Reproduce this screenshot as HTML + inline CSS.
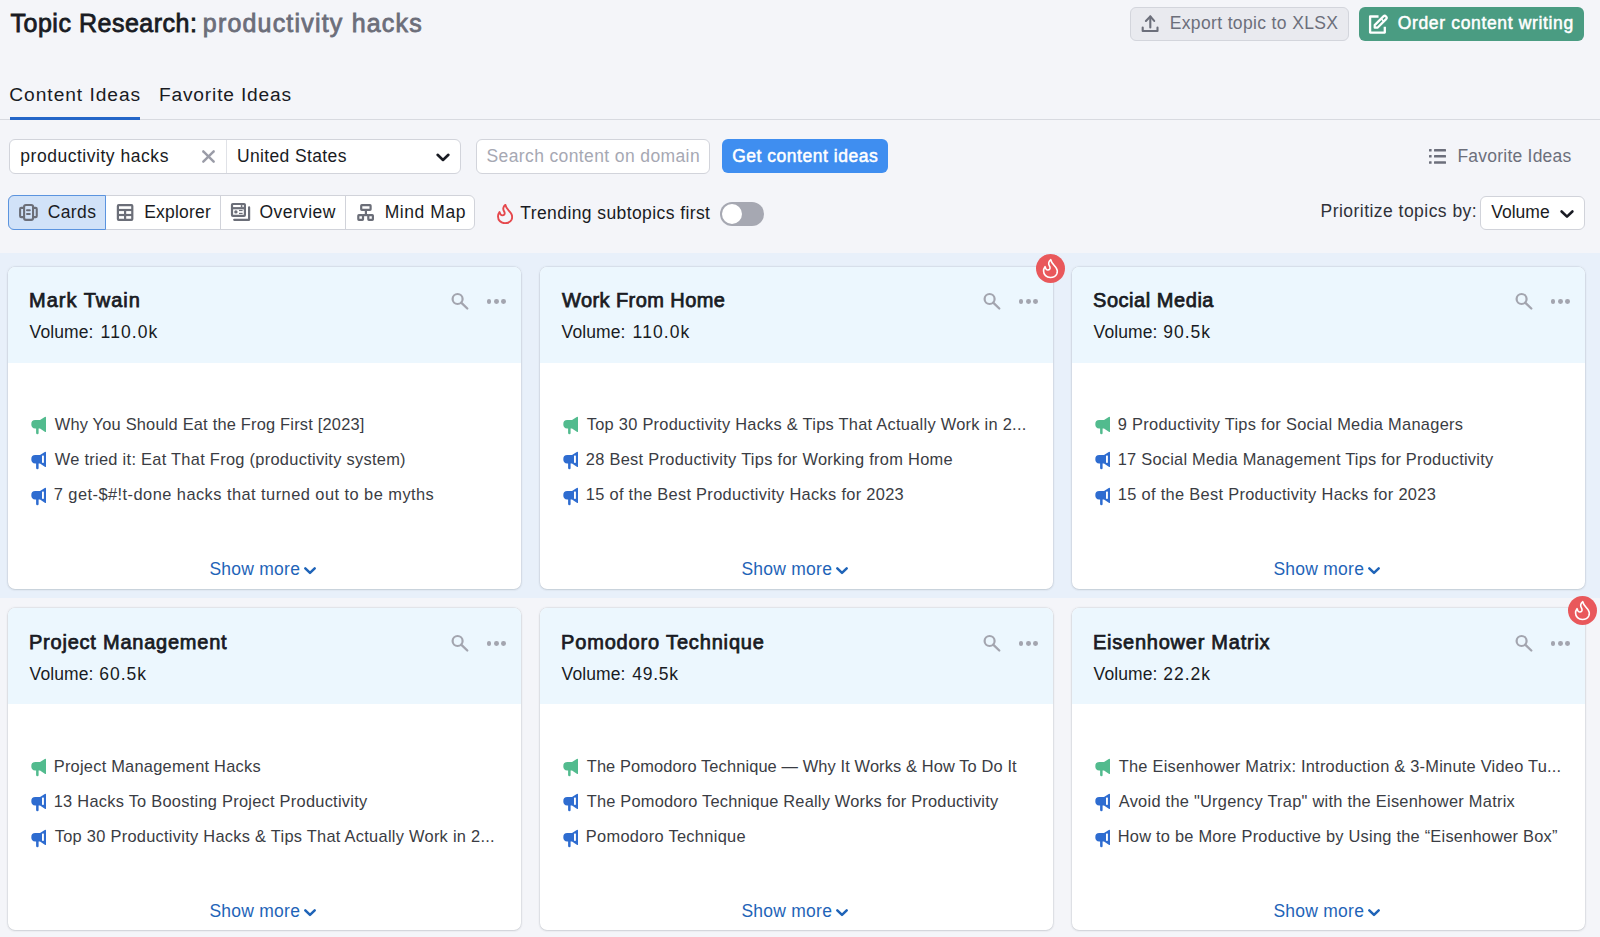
<!DOCTYPE html>
<html><head><meta charset="utf-8"><title>Topic Research</title>
<style>
html,body{margin:0;padding:0;}
body{width:1600px;height:937px;overflow:hidden;position:relative;background:#f4f5f9;font-family:"Liberation Sans", sans-serif;}
.t{position:absolute;white-space:nowrap;}
.abs{position:absolute;}
.band{position:absolute;left:0;top:253px;width:1600px;height:345px;background:#e8f0fa;}
.card{position:absolute;width:513px;height:322px;background:#fff;border-radius:7px;box-shadow:0 0 0 0.5px rgba(40,45,60,0.06),0 0 2.5px rgba(40,45,60,0.15),0 1px 2px rgba(40,45,60,0.10);overflow:hidden;}
.chead{position:absolute;left:0;top:0;width:513px;height:96px;background:#ecf7fe;}
.dot{position:absolute;width:4.8px;height:4.8px;border-radius:50%;background:#a3a5af;}
.badge{position:absolute;width:29px;height:29px;border-radius:50%;background:#e9585b;}
.box{position:absolute;box-sizing:border-box;}
</style></head><body>
<div class="band"></div>
<!-- header buttons -->
<div class="box" style="left:1130px;top:7px;width:219px;height:34px;background:#e9eaef;border:1px solid #d3d5dc;border-radius:6px"></div>
<svg class="abs" style="left:1140px;top:14px" width="20" height="20" viewBox="0 0 20 20"><polyline points="5.9,6.9 10.3,2.4 14.2,6.9" fill="none" stroke="#6c6f7b" stroke-width="2.1" stroke-linecap="round" stroke-linejoin="round"/><line x1="10.3" y1="2.6" x2="10.3" y2="13.4" stroke="#6c6f7b" stroke-width="2.1" stroke-linecap="round"/><polyline points="2.7,13.6 2.7,17 17.5,17 17.5,13.6" fill="none" stroke="#6c6f7b" stroke-width="2.1" stroke-linecap="round" stroke-linejoin="round"/></svg>
<div class="box" style="left:1359px;top:7px;width:225px;height:33.5px;background:#4a9c82;border-radius:6px"></div>
<svg class="abs" style="left:1364px;top:10px" width="26" height="26" viewBox="0 0 26 26"><polyline points="13.4,6.5 6.1,6.5 6.1,22.6 20.8,22.6 20.8,18" fill="none" stroke="#fff" stroke-width="2.3" stroke-linejoin="round" stroke-linecap="square"/><path d="M10.7 17.7 V15.1 L19.4 6.4 A1.91 1.91 0 0 1 22.1 9.1 L13.5 17.7 Z" fill="none" stroke="#fff" stroke-width="2.2" stroke-linejoin="round"/><line x1="17.2" y1="8.7" x2="19.7" y2="11.2" stroke="#fff" stroke-width="1.6"/></svg>
<!-- tabs -->
<div class="abs" style="left:0;top:119px;width:1600px;height:1px;background:#d8dae0"></div>
<div class="abs" style="left:9.6px;top:117px;width:130.6px;height:3px;background:#2466c8"></div>
<!-- search row -->
<div class="box" style="left:9px;top:139px;width:451.5px;height:34.5px;background:#fff;border:1px solid #d2d4db;border-radius:6px"></div>
<div class="abs" style="left:226px;top:140px;width:1.2px;height:32.5px;background:#e0e2e7"></div>
<svg class="abs" style="left:200px;top:148px" width="17" height="17" viewBox="0 0 17 17"><line x1="3.3" y1="3.3" x2="13.7" y2="13.7" stroke="#9a9ca7" stroke-width="2.4" stroke-linecap="round"/><line x1="13.7" y1="3.3" x2="3.3" y2="13.7" stroke="#9a9ca7" stroke-width="2.4" stroke-linecap="round"/></svg>
<svg class="abs" style="left:435px;top:150px" width="16" height="14" viewBox="0 0 16 14"><polyline points="2.6,4.8 8,10 13.4,4.8" fill="none" stroke="#191b23" stroke-width="2.6" stroke-linecap="round" stroke-linejoin="round"/></svg>
<div class="box" style="left:476px;top:139px;width:234px;height:34.5px;background:#fff;border:1px solid #d2d4db;border-radius:6px"></div>
<div class="box" style="left:722px;top:139px;width:166px;height:34.3px;background:#3f8ef0;border-radius:6px"></div>
<svg class="abs" style="left:1426px;top:146px" width="22" height="20" viewBox="0 0 22 20"><g fill="#6c6f7b"><rect x="3" y="2.9" width="2.6" height="2.5" rx="0.5"/><rect x="3" y="9" width="2.6" height="2.5" rx="0.5"/><rect x="3" y="15.3" width="2.6" height="2.5" rx="0.5"/><rect x="8" y="2.9" width="12" height="2.5" rx="0.5"/><rect x="8" y="9" width="12" height="2.5" rx="0.5"/><rect x="8" y="15.3" width="12" height="2.5" rx="0.5"/></g></svg>
<!-- view row -->
<div class="box" style="left:8px;top:195px;width:466.5px;height:34.5px;background:#fff;border:1px solid #d1d3da;border-radius:6px"></div>
<div class="box" style="left:8px;top:195px;width:98px;height:34.5px;background:#d1e2f8;border:1px solid #5b94df;border-radius:6px 0 0 6px"></div>
<div class="abs" style="left:220px;top:196px;width:1px;height:32.5px;background:#d1d3da"></div>
<div class="abs" style="left:345px;top:196px;width:1px;height:32.5px;background:#d1d3da"></div>
<svg class="abs" style="left:17px;top:202px" width="22" height="20" viewBox="0 0 22 20"><g fill="none" stroke="#6b6e78" stroke-width="2.1" stroke-linejoin="round"><rect x="7.1" y="2.95" width="8.95" height="14.9" rx="1.8"/><path d="M7.1 5.85 H4.3 Q3.1 5.85 3.1 7.05 V13.95 Q3.1 15.15 4.3 15.15 H7.1"/><path d="M16.05 5.85 H18.55 Q19.75 5.85 19.75 7.05 V13.95 Q19.75 15.15 18.55 15.15 H16.05"/></g><g stroke="#6b6e78" stroke-width="2" stroke-linecap="round"><line x1="10" y1="8.2" x2="12.8" y2="8.2"/><line x1="10" y1="11.9" x2="12.8" y2="11.9"/></g></svg>
<svg class="abs" style="left:115px;top:202px" width="20" height="20" viewBox="0 0 20 20"><g fill="none" stroke="#6b6e78" stroke-width="2.2"><rect x="2.9" y="3.1" width="14.4" height="14.7" rx="0.8"/><line x1="2.9" y1="8" x2="17.3" y2="8"/><line x1="2.9" y1="13" x2="17.3" y2="13"/><line x1="10.1" y1="8" x2="10.1" y2="17.8"/></g></svg>
<svg class="abs" style="left:229px;top:201px" width="22" height="21" viewBox="0 0 22 21"><g fill="none" stroke="#6b6e78" stroke-width="2.2" stroke-linejoin="round"><rect x="3" y="3" width="12.9" height="11.9" rx="0.8"/><line x1="3" y1="7.2" x2="15.9" y2="7.2"/><polyline points="5.2,18.8 20.1,18.8 20.1,6.4" stroke-linecap="round"/></g><circle cx="6.9" cy="10.9" r="1.7" fill="#6b6e78"/><g stroke="#6b6e78" stroke-width="1.2"><line x1="10" y1="9.5" x2="13.6" y2="9.5"/><line x1="10" y1="12.4" x2="13.6" y2="12.4"/><line x1="12.6" y1="4.1" x2="12.6" y2="6.1" stroke-width="1.6"/></g></svg>
<svg class="abs" style="left:355px;top:202px" width="22" height="20" viewBox="0 0 22 20"><g fill="none" stroke="#6b6e78" stroke-width="2.2" stroke-linejoin="round"><rect x="6.2" y="3.2" width="9.4" height="4.6" rx="0.6"/><line x1="10.9" y1="7.8" x2="10.9" y2="13.1"/><rect x="3.3" y="13.1" width="4.7" height="4.7" rx="0.6"/><rect x="13.3" y="13.1" width="4.6" height="4.7" rx="0.6"/><line x1="8" y1="13.1" x2="13.3" y2="13.1"/></g></svg>
<svg class="abs" style="left:497px;top:204px" width="16" height="20" viewBox="0 0 16 20"><path d="M8.4 0.8 C9 4.5 12 6.5 13.8 9 C15.2 11 15.5 13.5 14.6 15.6 C13.5 18 11 19.2 8 19.2 C4 19.2 1 16.2 1 12.4 C1 10.7 1.6 9.2 2.5 8 C3 10 3.8 11.4 5.4 11.4 C7 11.4 8 10.3 7.6 8.6 C7.2 7.2 6 6.3 6.3 4.2 C6.5 2.8 7.3 1.6 8.4 0.8 Z" fill="none" stroke="#e5484d" stroke-width="1.9" stroke-linejoin="round"/></svg>
<div class="abs" style="left:720px;top:201.5px;width:44px;height:24px;border-radius:12px;background:#a6a8b2"></div>
<div class="abs" style="left:722px;top:203.5px;width:20px;height:20px;border-radius:50%;background:#fff"></div>
<div class="box" style="left:1480px;top:195.5px;width:104.5px;height:34px;background:#fff;border:1px solid #d1d3da;border-radius:6px"></div>
<svg class="abs" style="left:1559px;top:207px" width="16" height="14" viewBox="0 0 16 14"><polyline points="2.6,4.5 8,9.6 13.4,4.5" fill="none" stroke="#191b23" stroke-width="2.6" stroke-linecap="round" stroke-linejoin="round"/></svg>
<!-- cards -->
<div class='card' style='left:8px;top:267px'><div class='chead'></div></div>
<svg class='abs' style='left:449px;top:291px' width='20' height='20' viewBox='0 0 20 20'><circle cx='8.6' cy='8' r='5' fill='none' stroke='#a3a5af' stroke-width='2.2'/><line x1='12.2' y1='11.6' x2='18.3' y2='17.5' stroke='#a3a5af' stroke-width='2.3' stroke-linecap='round'/></svg>
<div class='dot' style='left:486.7px;top:299.0px'></div>
<div class='dot' style='left:494.0px;top:299.0px'></div>
<div class='dot' style='left:501.4px;top:299.0px'></div>
<div class='abs' style='left:31px;top:416.3px;width:16px;height:19px'><svg width='16' height='19' viewBox='0 0 16 19'><path d='M4.2 4.1 H9 L13.8 0.9 Q15 0.2 15 1.6 V15.2 Q15 16.6 13.8 15.8 L9 12.4 H4.2 Q0.3 12.4 0.3 8.25 Q0.3 4.1 4.2 4.1Z' fill='#52bb8e'/><rect x='5.1' y='10.5' width='2.5' height='7.8' rx='1.25' fill='#52bb8e'/></svg></div>
<div class='abs' style='left:31px;top:451.4px;width:16px;height:19px'><svg width='16' height='19' viewBox='0 0 16 19'><path d='M4.2 4.1 H9 L13.8 0.9 Q15 0.2 15 1.6 V15.2 Q15 16.6 13.8 15.8 L9 12.4 H4.2 Q0.3 12.4 0.3 8.25 Q0.3 4.1 4.2 4.1Z' fill='#2e6cd0'/><rect x='5.1' y='10.5' width='2.5' height='7.8' rx='1.25' fill='#2e6cd0'/><rect x='11' y='4.6' width='1.9' height='7.2' fill='#fff'/></svg></div>
<div class='abs' style='left:31px;top:486.5px;width:16px;height:19px'><svg width='16' height='19' viewBox='0 0 16 19'><path d='M4.2 4.1 H9 L13.8 0.9 Q15 0.2 15 1.6 V15.2 Q15 16.6 13.8 15.8 L9 12.4 H4.2 Q0.3 12.4 0.3 8.25 Q0.3 4.1 4.2 4.1Z' fill='#2e6cd0'/><rect x='5.1' y='10.5' width='2.5' height='7.8' rx='1.25' fill='#2e6cd0'/><rect x='11' y='4.6' width='1.9' height='7.2' fill='#fff'/></svg></div>
<svg class='abs' style='left:302px;top:564px' width='16' height='12' viewBox='0 0 16 12'><polyline points='3.3,4.3 8,8.9 12.7,4.3' fill='none' stroke='#1f64b8' stroke-width='2.5' stroke-linecap='round' stroke-linejoin='round'/></svg>
<div class='card' style='left:540px;top:267px'><div class='chead'></div></div>
<svg class='abs' style='left:981px;top:291px' width='20' height='20' viewBox='0 0 20 20'><circle cx='8.6' cy='8' r='5' fill='none' stroke='#a3a5af' stroke-width='2.2'/><line x1='12.2' y1='11.6' x2='18.3' y2='17.5' stroke='#a3a5af' stroke-width='2.3' stroke-linecap='round'/></svg>
<div class='dot' style='left:1018.7px;top:299.0px'></div>
<div class='dot' style='left:1026.0px;top:299.0px'></div>
<div class='dot' style='left:1033.4px;top:299.0px'></div>
<div class='abs' style='left:563px;top:416.3px;width:16px;height:19px'><svg width='16' height='19' viewBox='0 0 16 19'><path d='M4.2 4.1 H9 L13.8 0.9 Q15 0.2 15 1.6 V15.2 Q15 16.6 13.8 15.8 L9 12.4 H4.2 Q0.3 12.4 0.3 8.25 Q0.3 4.1 4.2 4.1Z' fill='#52bb8e'/><rect x='5.1' y='10.5' width='2.5' height='7.8' rx='1.25' fill='#52bb8e'/></svg></div>
<div class='abs' style='left:563px;top:451.4px;width:16px;height:19px'><svg width='16' height='19' viewBox='0 0 16 19'><path d='M4.2 4.1 H9 L13.8 0.9 Q15 0.2 15 1.6 V15.2 Q15 16.6 13.8 15.8 L9 12.4 H4.2 Q0.3 12.4 0.3 8.25 Q0.3 4.1 4.2 4.1Z' fill='#2e6cd0'/><rect x='5.1' y='10.5' width='2.5' height='7.8' rx='1.25' fill='#2e6cd0'/><rect x='11' y='4.6' width='1.9' height='7.2' fill='#fff'/></svg></div>
<div class='abs' style='left:563px;top:486.5px;width:16px;height:19px'><svg width='16' height='19' viewBox='0 0 16 19'><path d='M4.2 4.1 H9 L13.8 0.9 Q15 0.2 15 1.6 V15.2 Q15 16.6 13.8 15.8 L9 12.4 H4.2 Q0.3 12.4 0.3 8.25 Q0.3 4.1 4.2 4.1Z' fill='#2e6cd0'/><rect x='5.1' y='10.5' width='2.5' height='7.8' rx='1.25' fill='#2e6cd0'/><rect x='11' y='4.6' width='1.9' height='7.2' fill='#fff'/></svg></div>
<svg class='abs' style='left:834px;top:564px' width='16' height='12' viewBox='0 0 16 12'><polyline points='3.3,4.3 8,8.9 12.7,4.3' fill='none' stroke='#1f64b8' stroke-width='2.5' stroke-linecap='round' stroke-linejoin='round'/></svg>
<div class='badge' style='left:1035.5px;top:254.10000000000002px'><svg width='29' height='29' viewBox='0 0 29 29'><g transform='translate(6.6 4.9) scale(0.97)'><path d='M8.4 0.8 C9 4.5 12 6.5 13.8 9 C15.2 11 15.5 13.5 14.6 15.6 C13.5 18 11 19.2 8 19.2 C4 19.2 1 16.2 1 12.4 C1 10.7 1.6 9.2 2.5 8 C3 10 3.8 11.4 5.4 11.4 C7 11.4 8 10.3 7.6 8.6 C7.2 7.2 6 6.3 6.3 4.2 C6.5 2.8 7.3 1.6 8.4 0.8 Z' fill='none' stroke='#fff' stroke-width='1.65' stroke-linejoin='round'/></g></svg></div>
<div class='card' style='left:1072px;top:267px'><div class='chead'></div></div>
<svg class='abs' style='left:1513px;top:291px' width='20' height='20' viewBox='0 0 20 20'><circle cx='8.6' cy='8' r='5' fill='none' stroke='#a3a5af' stroke-width='2.2'/><line x1='12.2' y1='11.6' x2='18.3' y2='17.5' stroke='#a3a5af' stroke-width='2.3' stroke-linecap='round'/></svg>
<div class='dot' style='left:1550.7px;top:299.0px'></div>
<div class='dot' style='left:1558.0px;top:299.0px'></div>
<div class='dot' style='left:1565.4px;top:299.0px'></div>
<div class='abs' style='left:1095px;top:416.3px;width:16px;height:19px'><svg width='16' height='19' viewBox='0 0 16 19'><path d='M4.2 4.1 H9 L13.8 0.9 Q15 0.2 15 1.6 V15.2 Q15 16.6 13.8 15.8 L9 12.4 H4.2 Q0.3 12.4 0.3 8.25 Q0.3 4.1 4.2 4.1Z' fill='#52bb8e'/><rect x='5.1' y='10.5' width='2.5' height='7.8' rx='1.25' fill='#52bb8e'/></svg></div>
<div class='abs' style='left:1095px;top:451.4px;width:16px;height:19px'><svg width='16' height='19' viewBox='0 0 16 19'><path d='M4.2 4.1 H9 L13.8 0.9 Q15 0.2 15 1.6 V15.2 Q15 16.6 13.8 15.8 L9 12.4 H4.2 Q0.3 12.4 0.3 8.25 Q0.3 4.1 4.2 4.1Z' fill='#2e6cd0'/><rect x='5.1' y='10.5' width='2.5' height='7.8' rx='1.25' fill='#2e6cd0'/><rect x='11' y='4.6' width='1.9' height='7.2' fill='#fff'/></svg></div>
<div class='abs' style='left:1095px;top:486.5px;width:16px;height:19px'><svg width='16' height='19' viewBox='0 0 16 19'><path d='M4.2 4.1 H9 L13.8 0.9 Q15 0.2 15 1.6 V15.2 Q15 16.6 13.8 15.8 L9 12.4 H4.2 Q0.3 12.4 0.3 8.25 Q0.3 4.1 4.2 4.1Z' fill='#2e6cd0'/><rect x='5.1' y='10.5' width='2.5' height='7.8' rx='1.25' fill='#2e6cd0'/><rect x='11' y='4.6' width='1.9' height='7.2' fill='#fff'/></svg></div>
<svg class='abs' style='left:1366px;top:564px' width='16' height='12' viewBox='0 0 16 12'><polyline points='3.3,4.3 8,8.9 12.7,4.3' fill='none' stroke='#1f64b8' stroke-width='2.5' stroke-linecap='round' stroke-linejoin='round'/></svg>
<div class='card' style='left:8px;top:608px'><div class='chead'></div></div>
<svg class='abs' style='left:449px;top:633px' width='20' height='20' viewBox='0 0 20 20'><circle cx='8.6' cy='8' r='5' fill='none' stroke='#a3a5af' stroke-width='2.2'/><line x1='12.2' y1='11.6' x2='18.3' y2='17.5' stroke='#a3a5af' stroke-width='2.3' stroke-linecap='round'/></svg>
<div class='dot' style='left:486.7px;top:641.0px'></div>
<div class='dot' style='left:494.0px;top:641.0px'></div>
<div class='dot' style='left:501.4px;top:641.0px'></div>
<div class='abs' style='left:31px;top:758.3px;width:16px;height:19px'><svg width='16' height='19' viewBox='0 0 16 19'><path d='M4.2 4.1 H9 L13.8 0.9 Q15 0.2 15 1.6 V15.2 Q15 16.6 13.8 15.8 L9 12.4 H4.2 Q0.3 12.4 0.3 8.25 Q0.3 4.1 4.2 4.1Z' fill='#52bb8e'/><rect x='5.1' y='10.5' width='2.5' height='7.8' rx='1.25' fill='#52bb8e'/></svg></div>
<div class='abs' style='left:31px;top:793.4px;width:16px;height:19px'><svg width='16' height='19' viewBox='0 0 16 19'><path d='M4.2 4.1 H9 L13.8 0.9 Q15 0.2 15 1.6 V15.2 Q15 16.6 13.8 15.8 L9 12.4 H4.2 Q0.3 12.4 0.3 8.25 Q0.3 4.1 4.2 4.1Z' fill='#2e6cd0'/><rect x='5.1' y='10.5' width='2.5' height='7.8' rx='1.25' fill='#2e6cd0'/><rect x='11' y='4.6' width='1.9' height='7.2' fill='#fff'/></svg></div>
<div class='abs' style='left:31px;top:828.5px;width:16px;height:19px'><svg width='16' height='19' viewBox='0 0 16 19'><path d='M4.2 4.1 H9 L13.8 0.9 Q15 0.2 15 1.6 V15.2 Q15 16.6 13.8 15.8 L9 12.4 H4.2 Q0.3 12.4 0.3 8.25 Q0.3 4.1 4.2 4.1Z' fill='#2e6cd0'/><rect x='5.1' y='10.5' width='2.5' height='7.8' rx='1.25' fill='#2e6cd0'/><rect x='11' y='4.6' width='1.9' height='7.2' fill='#fff'/></svg></div>
<svg class='abs' style='left:302px;top:906px' width='16' height='12' viewBox='0 0 16 12'><polyline points='3.3,4.3 8,8.9 12.7,4.3' fill='none' stroke='#1f64b8' stroke-width='2.5' stroke-linecap='round' stroke-linejoin='round'/></svg>
<div class='card' style='left:540px;top:608px'><div class='chead'></div></div>
<svg class='abs' style='left:981px;top:633px' width='20' height='20' viewBox='0 0 20 20'><circle cx='8.6' cy='8' r='5' fill='none' stroke='#a3a5af' stroke-width='2.2'/><line x1='12.2' y1='11.6' x2='18.3' y2='17.5' stroke='#a3a5af' stroke-width='2.3' stroke-linecap='round'/></svg>
<div class='dot' style='left:1018.7px;top:641.0px'></div>
<div class='dot' style='left:1026.0px;top:641.0px'></div>
<div class='dot' style='left:1033.4px;top:641.0px'></div>
<div class='abs' style='left:563px;top:758.3px;width:16px;height:19px'><svg width='16' height='19' viewBox='0 0 16 19'><path d='M4.2 4.1 H9 L13.8 0.9 Q15 0.2 15 1.6 V15.2 Q15 16.6 13.8 15.8 L9 12.4 H4.2 Q0.3 12.4 0.3 8.25 Q0.3 4.1 4.2 4.1Z' fill='#52bb8e'/><rect x='5.1' y='10.5' width='2.5' height='7.8' rx='1.25' fill='#52bb8e'/></svg></div>
<div class='abs' style='left:563px;top:793.4px;width:16px;height:19px'><svg width='16' height='19' viewBox='0 0 16 19'><path d='M4.2 4.1 H9 L13.8 0.9 Q15 0.2 15 1.6 V15.2 Q15 16.6 13.8 15.8 L9 12.4 H4.2 Q0.3 12.4 0.3 8.25 Q0.3 4.1 4.2 4.1Z' fill='#2e6cd0'/><rect x='5.1' y='10.5' width='2.5' height='7.8' rx='1.25' fill='#2e6cd0'/><rect x='11' y='4.6' width='1.9' height='7.2' fill='#fff'/></svg></div>
<div class='abs' style='left:563px;top:828.5px;width:16px;height:19px'><svg width='16' height='19' viewBox='0 0 16 19'><path d='M4.2 4.1 H9 L13.8 0.9 Q15 0.2 15 1.6 V15.2 Q15 16.6 13.8 15.8 L9 12.4 H4.2 Q0.3 12.4 0.3 8.25 Q0.3 4.1 4.2 4.1Z' fill='#2e6cd0'/><rect x='5.1' y='10.5' width='2.5' height='7.8' rx='1.25' fill='#2e6cd0'/><rect x='11' y='4.6' width='1.9' height='7.2' fill='#fff'/></svg></div>
<svg class='abs' style='left:834px;top:906px' width='16' height='12' viewBox='0 0 16 12'><polyline points='3.3,4.3 8,8.9 12.7,4.3' fill='none' stroke='#1f64b8' stroke-width='2.5' stroke-linecap='round' stroke-linejoin='round'/></svg>
<div class='card' style='left:1072px;top:608px'><div class='chead'></div></div>
<svg class='abs' style='left:1513px;top:633px' width='20' height='20' viewBox='0 0 20 20'><circle cx='8.6' cy='8' r='5' fill='none' stroke='#a3a5af' stroke-width='2.2'/><line x1='12.2' y1='11.6' x2='18.3' y2='17.5' stroke='#a3a5af' stroke-width='2.3' stroke-linecap='round'/></svg>
<div class='dot' style='left:1550.7px;top:641.0px'></div>
<div class='dot' style='left:1558.0px;top:641.0px'></div>
<div class='dot' style='left:1565.4px;top:641.0px'></div>
<div class='abs' style='left:1095px;top:758.3px;width:16px;height:19px'><svg width='16' height='19' viewBox='0 0 16 19'><path d='M4.2 4.1 H9 L13.8 0.9 Q15 0.2 15 1.6 V15.2 Q15 16.6 13.8 15.8 L9 12.4 H4.2 Q0.3 12.4 0.3 8.25 Q0.3 4.1 4.2 4.1Z' fill='#52bb8e'/><rect x='5.1' y='10.5' width='2.5' height='7.8' rx='1.25' fill='#52bb8e'/></svg></div>
<div class='abs' style='left:1095px;top:793.4px;width:16px;height:19px'><svg width='16' height='19' viewBox='0 0 16 19'><path d='M4.2 4.1 H9 L13.8 0.9 Q15 0.2 15 1.6 V15.2 Q15 16.6 13.8 15.8 L9 12.4 H4.2 Q0.3 12.4 0.3 8.25 Q0.3 4.1 4.2 4.1Z' fill='#2e6cd0'/><rect x='5.1' y='10.5' width='2.5' height='7.8' rx='1.25' fill='#2e6cd0'/><rect x='11' y='4.6' width='1.9' height='7.2' fill='#fff'/></svg></div>
<div class='abs' style='left:1095px;top:828.5px;width:16px;height:19px'><svg width='16' height='19' viewBox='0 0 16 19'><path d='M4.2 4.1 H9 L13.8 0.9 Q15 0.2 15 1.6 V15.2 Q15 16.6 13.8 15.8 L9 12.4 H4.2 Q0.3 12.4 0.3 8.25 Q0.3 4.1 4.2 4.1Z' fill='#2e6cd0'/><rect x='5.1' y='10.5' width='2.5' height='7.8' rx='1.25' fill='#2e6cd0'/><rect x='11' y='4.6' width='1.9' height='7.2' fill='#fff'/></svg></div>
<svg class='abs' style='left:1366px;top:906px' width='16' height='12' viewBox='0 0 16 12'><polyline points='3.3,4.3 8,8.9 12.7,4.3' fill='none' stroke='#1f64b8' stroke-width='2.5' stroke-linecap='round' stroke-linejoin='round'/></svg>
<div class='badge' style='left:1567.5px;top:596.1px'><svg width='29' height='29' viewBox='0 0 29 29'><g transform='translate(6.6 4.9) scale(0.97)'><path d='M8.4 0.8 C9 4.5 12 6.5 13.8 9 C15.2 11 15.5 13.5 14.6 15.6 C13.5 18 11 19.2 8 19.2 C4 19.2 1 16.2 1 12.4 C1 10.7 1.6 9.2 2.5 8 C3 10 3.8 11.4 5.4 11.4 C7 11.4 8 10.3 7.6 8.6 C7.2 7.2 6 6.3 6.3 4.2 C6.5 2.8 7.3 1.6 8.4 0.8 Z' fill='none' stroke='#fff' stroke-width='1.65' stroke-linejoin='round'/></g></svg></div>
<!-- texts -->
<div class='t' style='left:10.50px;top:11.20px;font-size:25px;line-height:25px;font-weight:400;color:#191b23;letter-spacing:0.514px;-webkit-text-stroke:0.8px #191b23'>Topic Research:</div>
<div class='t' style='left:202.80px;top:10.80px;font-size:25px;line-height:25px;font-weight:400;color:#6c6e7a;letter-spacing:1.188px;-webkit-text-stroke:0.8px #6c6e7a'>productivity hacks</div>
<div class='t' style='left:1169.70px;top:14.80px;font-size:17.5px;line-height:17.5px;font-weight:400;color:#6c6f7b;letter-spacing:0.358px'>Export topic to XLSX</div>
<div class='t' style='left:1397.75px;top:14.90px;font-size:17.5px;line-height:17.5px;font-weight:400;color:#ffffff;letter-spacing:0.650px;-webkit-text-stroke:0.5px #ffffff'>Order content writing</div>
<div class='t' style='left:9.30px;top:84.90px;font-size:19.2px;line-height:19.2px;font-weight:400;color:#191b23;letter-spacing:0.950px'>Content Ideas</div>
<div class='t' style='left:158.90px;top:84.90px;font-size:19.2px;line-height:19.2px;font-weight:400;color:#191b23;letter-spacing:0.823px'>Favorite Ideas</div>
<div class='t' style='left:20.30px;top:148.20px;font-size:17.5px;line-height:17.5px;font-weight:400;color:#191b23;letter-spacing:0.529px'>productivity hacks</div>
<div class='t' style='left:236.90px;top:147.80px;font-size:17.5px;line-height:17.5px;font-weight:400;color:#191b23;letter-spacing:0.375px'>United States</div>
<div class='t' style='left:486.50px;top:148.00px;font-size:17.5px;line-height:17.5px;font-weight:400;color:#a6a8b3;letter-spacing:0.383px'>Search content on domain</div>
<div class='t' style='left:732.20px;top:147.80px;font-size:17.5px;line-height:17.5px;font-weight:400;color:#ffffff;letter-spacing:0.519px;-webkit-text-stroke:0.5px #ffffff'>Get content ideas</div>
<div class='t' style='left:1457.40px;top:148.25px;font-size:17.5px;line-height:17.5px;font-weight:400;color:#6c6f7b;letter-spacing:0.231px'>Favorite Ideas</div>
<div class='t' style='left:47.75px;top:203.70px;font-size:17.5px;line-height:17.5px;font-weight:400;color:#191b23;letter-spacing:0.375px'>Cards</div>
<div class='t' style='left:144.20px;top:203.70px;font-size:17.5px;line-height:17.5px;font-weight:400;color:#191b23;letter-spacing:0.214px'>Explorer</div>
<div class='t' style='left:259.60px;top:203.50px;font-size:17.5px;line-height:17.5px;font-weight:400;color:#191b23;letter-spacing:0.400px'>Overview</div>
<div class='t' style='left:384.70px;top:203.50px;font-size:17.5px;line-height:17.5px;font-weight:400;color:#191b23;letter-spacing:0.557px'>Mind Map</div>
<div class='t' style='left:520.30px;top:204.50px;font-size:17.5px;line-height:17.5px;font-weight:400;color:#191b23;letter-spacing:0.409px'>Trending subtopics first</div>
<div class='t' style='left:1320.60px;top:203.20px;font-size:17.5px;line-height:17.5px;font-weight:400;color:#2f3138;letter-spacing:0.460px'>Prioritize topics by:</div>
<div class='t' style='left:1491.25px;top:204.10px;font-size:17.5px;line-height:17.5px;font-weight:400;color:#191b23;letter-spacing:0.000px'>Volume</div>
<div class='t' style='left:29.00px;top:290.20px;font-size:20px;line-height:20px;font-weight:400;color:#191b23;letter-spacing:1.000px;-webkit-text-stroke:0.75px #191b23'>Mark Twain</div>
<div class='t' style='left:29.60px;top:324.30px;font-size:17.5px;line-height:17.5px;font-weight:400;color:#191b23;letter-spacing:0.108px'>Volume:</div>
<div class='t' style='left:100.60px;top:324.30px;font-size:17.5px;line-height:17.5px;font-weight:400;color:#191b23;letter-spacing:1.100px'>110.0k</div>
<div class='t' style='left:54.75px;top:415.75px;font-size:16.4px;line-height:16.4px;font-weight:400;color:#3a3c43;letter-spacing:0.205px'>Why You Should Eat the Frog First [2023]</div>
<div class='t' style='left:54.75px;top:450.85px;font-size:16.4px;line-height:16.4px;font-weight:400;color:#3a3c43;letter-spacing:0.287px'>We tried it: Eat That Frog (productivity system)</div>
<div class='t' style='left:53.75px;top:485.95px;font-size:16.4px;line-height:16.4px;font-weight:400;color:#3a3c43;letter-spacing:0.458px'>7 get-$#!t-done hacks that turned out to be myths</div>
<div class='t' style='left:209.40px;top:560.80px;font-size:17.5px;line-height:17.5px;font-weight:400;color:#1f64b8;letter-spacing:0.250px'>Show more</div>
<div class='t' style='left:562.00px;top:290.20px;font-size:20px;line-height:20px;font-weight:400;color:#191b23;letter-spacing:0.423px;-webkit-text-stroke:0.75px #191b23'>Work From Home</div>
<div class='t' style='left:561.60px;top:324.30px;font-size:17.5px;line-height:17.5px;font-weight:400;color:#191b23;letter-spacing:0.108px'>Volume:</div>
<div class='t' style='left:632.60px;top:324.30px;font-size:17.5px;line-height:17.5px;font-weight:400;color:#191b23;letter-spacing:1.100px'>110.0k</div>
<div class='t' style='left:586.75px;top:415.75px;font-size:16.4px;line-height:16.4px;font-weight:400;color:#3a3c43;letter-spacing:0.269px'>Top 30 Productivity Hacks &amp; Tips That Actually Work in 2...</div>
<div class='t' style='left:585.75px;top:450.85px;font-size:16.4px;line-height:16.4px;font-weight:400;color:#3a3c43;letter-spacing:0.299px'>28 Best Productivity Tips for Working from Home</div>
<div class='t' style='left:585.75px;top:485.95px;font-size:16.4px;line-height:16.4px;font-weight:400;color:#3a3c43;letter-spacing:0.311px'>15 of the Best Productivity Hacks for 2023</div>
<div class='t' style='left:741.40px;top:560.80px;font-size:17.5px;line-height:17.5px;font-weight:400;color:#1f64b8;letter-spacing:0.250px'>Show more</div>
<div class='t' style='left:1093.00px;top:290.20px;font-size:20px;line-height:20px;font-weight:400;color:#191b23;letter-spacing:0.545px;-webkit-text-stroke:0.75px #191b23'>Social Media</div>
<div class='t' style='left:1093.60px;top:324.30px;font-size:17.5px;line-height:17.5px;font-weight:400;color:#191b23;letter-spacing:0.108px'>Volume:</div>
<div class='t' style='left:1163.30px;top:324.30px;font-size:17.5px;line-height:17.5px;font-weight:400;color:#191b23;letter-spacing:0.975px'>90.5k</div>
<div class='t' style='left:1117.75px;top:415.75px;font-size:16.4px;line-height:16.4px;font-weight:400;color:#3a3c43;letter-spacing:0.290px'>9 Productivity Tips for Social Media Managers</div>
<div class='t' style='left:1117.75px;top:450.85px;font-size:16.4px;line-height:16.4px;font-weight:400;color:#3a3c43;letter-spacing:0.234px'>17 Social Media Management Tips for Productivity</div>
<div class='t' style='left:1117.75px;top:485.95px;font-size:16.4px;line-height:16.4px;font-weight:400;color:#3a3c43;letter-spacing:0.313px'>15 of the Best Productivity Hacks for 2023</div>
<div class='t' style='left:1273.40px;top:560.80px;font-size:17.5px;line-height:17.5px;font-weight:400;color:#1f64b8;letter-spacing:0.250px'>Show more</div>
<div class='t' style='left:29.00px;top:632.20px;font-size:20px;line-height:20px;font-weight:400;color:#191b23;letter-spacing:0.771px;-webkit-text-stroke:0.75px #191b23'>Project Management</div>
<div class='t' style='left:29.60px;top:666.30px;font-size:17.5px;line-height:17.5px;font-weight:400;color:#191b23;letter-spacing:0.108px'>Volume:</div>
<div class='t' style='left:99.30px;top:666.30px;font-size:17.5px;line-height:17.5px;font-weight:400;color:#191b23;letter-spacing:0.975px'>60.5k</div>
<div class='t' style='left:53.75px;top:757.75px;font-size:16.4px;line-height:16.4px;font-weight:400;color:#3a3c43;letter-spacing:0.239px'>Project Management Hacks</div>
<div class='t' style='left:53.75px;top:792.85px;font-size:16.4px;line-height:16.4px;font-weight:400;color:#3a3c43;letter-spacing:0.259px'>13 Hacks To Boosting Project Productivity</div>
<div class='t' style='left:54.75px;top:827.95px;font-size:16.4px;line-height:16.4px;font-weight:400;color:#3a3c43;letter-spacing:0.276px'>Top 30 Productivity Hacks &amp; Tips That Actually Work in 2...</div>
<div class='t' style='left:209.40px;top:902.80px;font-size:17.5px;line-height:17.5px;font-weight:400;color:#1f64b8;letter-spacing:0.250px'>Show more</div>
<div class='t' style='left:561.00px;top:632.20px;font-size:20px;line-height:20px;font-weight:400;color:#191b23;letter-spacing:0.841px;-webkit-text-stroke:0.75px #191b23'>Pomodoro Technique</div>
<div class='t' style='left:561.60px;top:666.30px;font-size:17.5px;line-height:17.5px;font-weight:400;color:#191b23;letter-spacing:0.108px'>Volume:</div>
<div class='t' style='left:632.30px;top:666.30px;font-size:17.5px;line-height:17.5px;font-weight:400;color:#191b23;letter-spacing:0.725px'>49.5k</div>
<div class='t' style='left:586.75px;top:757.75px;font-size:16.4px;line-height:16.4px;font-weight:400;color:#3a3c43;letter-spacing:0.123px'>The Pomodoro Technique — Why It Works &amp; How To Do It</div>
<div class='t' style='left:586.75px;top:792.85px;font-size:16.4px;line-height:16.4px;font-weight:400;color:#3a3c43;letter-spacing:0.201px'>The Pomodoro Technique Really Works for Productivity</div>
<div class='t' style='left:585.75px;top:827.95px;font-size:16.4px;line-height:16.4px;font-weight:400;color:#3a3c43;letter-spacing:0.309px'>Pomodoro Technique</div>
<div class='t' style='left:741.40px;top:902.80px;font-size:17.5px;line-height:17.5px;font-weight:400;color:#1f64b8;letter-spacing:0.250px'>Show more</div>
<div class='t' style='left:1093.00px;top:632.20px;font-size:20px;line-height:20px;font-weight:400;color:#191b23;letter-spacing:0.756px;-webkit-text-stroke:0.75px #191b23'>Eisenhower Matrix</div>
<div class='t' style='left:1093.60px;top:666.30px;font-size:17.5px;line-height:17.5px;font-weight:400;color:#191b23;letter-spacing:0.108px'>Volume:</div>
<div class='t' style='left:1163.30px;top:666.30px;font-size:17.5px;line-height:17.5px;font-weight:400;color:#191b23;letter-spacing:0.975px'>22.2k</div>
<div class='t' style='left:1118.75px;top:757.75px;font-size:16.4px;line-height:16.4px;font-weight:400;color:#3a3c43;letter-spacing:0.239px'>The Eisenhower Matrix: Introduction &amp; 3-Minute Video Tu...</div>
<div class='t' style='left:1118.75px;top:792.85px;font-size:16.4px;line-height:16.4px;font-weight:400;color:#3a3c43;letter-spacing:0.260px'>Avoid the "Urgency Trap" with the Eisenhower Matrix</div>
<div class='t' style='left:1117.75px;top:827.95px;font-size:16.4px;line-height:16.4px;font-weight:400;color:#3a3c43;letter-spacing:0.231px'>How to be More Productive by Using the “Eisenhower Box”</div>
<div class='t' style='left:1273.40px;top:902.80px;font-size:17.5px;line-height:17.5px;font-weight:400;color:#1f64b8;letter-spacing:0.250px'>Show more</div>
</body></html>
